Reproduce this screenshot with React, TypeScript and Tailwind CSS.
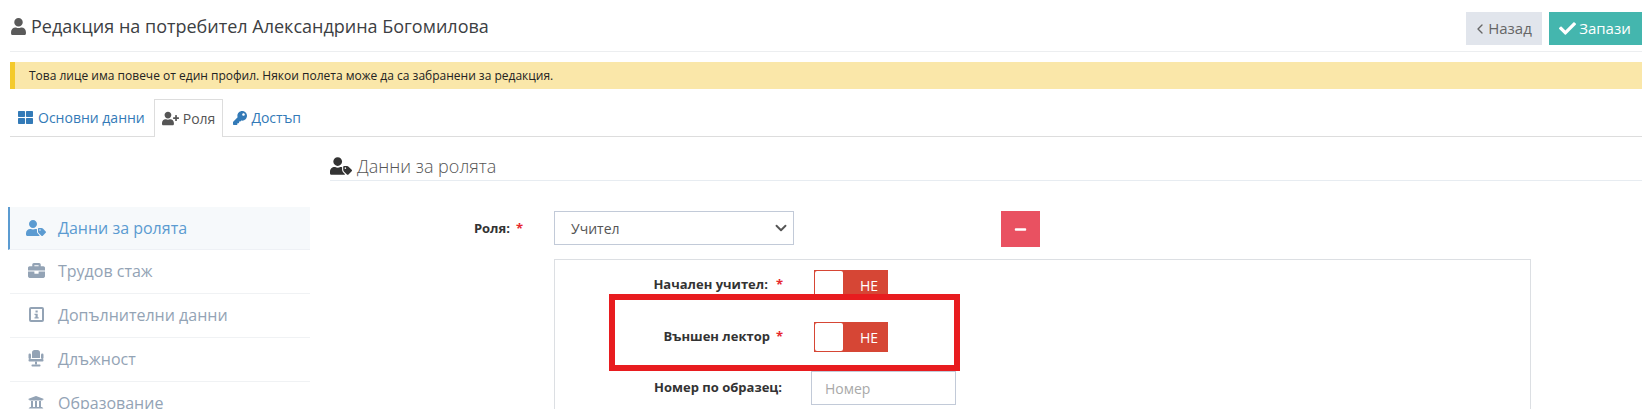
import { ChevronDown, ChevronLeft } from "lucide-react";
import {
  FaBriefcase,
  FaCheck,
  FaKey,
  FaMinus,
  FaThLarge,
  FaUniversity,
  FaUser,
  FaUserPlus,
  FaUserTag,
} from "react-icons/fa";

function InfoSquareIcon() {
  return (
    <svg width="15" height="15" viewBox="0 0 15 15" fill="none">
      <rect x="1" y="1" width="13" height="13" rx="1" stroke="currentColor" strokeWidth="2" />
      <rect x="6.5" y="3.5" width="2.2" height="2" fill="currentColor" />
      <path d="M5.5 6.7h3.2v3.6h1v1.2H5.5v-1.2h1V7.9h-1z" fill="currentColor" />
    </svg>
  );
}

function OfficeChairIcon() {
  return (
    <svg width="16" height="17" viewBox="0 0 16 17" fill="currentColor">
      <path d="M4 2.500C4 1 5 0 6.500 0h3C11 0 12 1 12 2.500V8H4z" />
      <rect x="0.500" y="3.500" width="2.500" height="5.500" rx="1.200" />
      <rect x="13" y="3.500" width="2.500" height="5.500" rx="1.200" />
      <rect x="0.500" y="9" width="15" height="2.500" rx="1" />
      <rect x="7" y="11.500" width="2" height="3" />
      <rect x="3.500" y="14.500" width="9" height="2" rx="0.800" />
    </svg>
  );
}

const sideItems = [
  { label: "Трудов стаж", icon: <FaBriefcase size={17} /> },
  { label: "Допълнителни данни", icon: <InfoSquareIcon /> },
  { label: "Длъжност", icon: <OfficeChairIcon /> },
  { label: "Образование", icon: <FaUniversity size={16} /> },
];

function Toggle() {
  return (
    <div className="flex h-[30px] w-[74px] bg-[#d64635] text-[14px] text-white">
      <div className="m-px w-[28px] rounded-[2px] bg-white" />
      <div className="flex flex-1 items-center justify-center pl-[6px]">НЕ</div>
    </div>
  );
}

function Required() {
  return <span className="ml-[8px] text-[#e7282e]">*</span>;
}

export default function App() {
  return (
    <div className="relative h-[409px] overflow-hidden bg-white pl-[10px] pr-[9px] font-['Open_Sans',sans-serif] text-[#333]">
      <header className="flex h-[52px] items-start justify-between border-b border-[#eceef0]">
        <h1 className="mt-[12px] flex items-center gap-[4px] text-[18px] leading-[28px] text-[#3c4043]">
          <FaUser size={17} className="text-[#5a5a5a]" />
          Редакция на потребител Александрина Богомилова
        </h1>
        <div className="mt-[12px] flex gap-[7px]">
          <button className="flex h-[33px] w-[76px] items-center justify-center bg-[#e1e5ec] pr-[4px] text-[15px] text-[#666]">
            <ChevronLeft size={16} strokeWidth={2} />
            Назад
          </button>
          <button className="flex h-[33px] w-[93px] items-center justify-center gap-[3px] bg-[#44b6ae] pr-[1px] text-[15px] text-white">
            <FaCheck size={17} />
            Запази
          </button>
        </div>
      </header>

      <div className="mt-[10px] flex h-[27px] items-center border-l-[5px] border-[#f4ca2c] bg-[#fae7a9] pl-[14px] text-[12px] text-[#222]">
        Това лице има повече от един профил. Някои полета може да са забранени за редакция.
      </div>

      <nav className="mt-[10px] flex h-[38px] items-end border-b border-[#ddd] text-[14px]">
        <a className="flex h-[37px] items-center gap-[5px] pl-[8px] pr-[9px] text-[#337ab7]">
          <FaThLarge size={15} />
          Основни данни
        </a>
        <a className="-mb-px flex h-[38px] items-center gap-[4px] border border-b-0 border-[#ddd] bg-white px-[7px] text-[#555]">
          <FaUserPlus size={17} />
          Роля
        </a>
        <a className="flex h-[37px] items-center gap-[4px] px-[10px] text-[#337ab7]">
          <FaKey size={14} />
          Достъп
        </a>
      </nav>

      <div className="flex">
        <aside className="mt-[70px] w-[300px] shrink-0">
          <div className="-ml-[2px] flex h-[43px] items-center gap-[12px] border-b border-[#eef1f5] border-l-2 border-l-[#5b9bd1] bg-[#f6f9fb] pl-[16px] text-[16px] text-[#5b9bd1]">
            <span className="flex w-[20px] justify-center">
              <FaUserTag size={20} />
            </span>
            Данни за ролята
          </div>
          {sideItems.map((item) => (
            <div
              key={item.label}
              className="flex h-[44px] items-center gap-[12px] border-b border-[#f0f2f4] pb-[2px] pl-[16px] text-[16px] text-[#93a3b5]"
            >
              <span className="flex w-[20px] justify-center">{item.icon}</span>
              {item.label}
            </div>
          ))}
        </aside>

        <main className="ml-[20px] flex-1">
          <h2 className="mt-[16px] flex h-[28px] items-center gap-[5px] border-b border-[#e7ecf1] pb-[1px] text-[18px] font-light text-[#555]">
            <FaUserTag size={22} className="text-[#333]" />
            Данни за ролята
          </h2>

          <div className="mt-[30px] flex items-start">
            <label className="mt-[8px] w-[224px] pr-[31px] text-right text-[13px] font-bold leading-[18px]">
              Роля:
              <span className="ml-[6px] text-[#e7282e]">*</span>
            </label>
            <div className="flex h-[34px] w-[240px] items-center justify-between border border-[#c2cad8] pl-[16px] pr-[3px] text-[14px] text-[#555]">
              Учител
              <ChevronDown size={18} strokeWidth={2.500} />
            </div>
            <button className="ml-[207px] flex h-[36px] w-[39px] items-center justify-center bg-[#e95161] text-white">
              <FaMinus size={13} />
            </button>
          </div>

          <div className="ml-[224px] mt-[12px] h-[200px] w-[977px] border border-[#dcdfe3]">
            <div className="mt-[10px] flex items-center">
              <label className="w-[228px] text-right text-[13px] font-bold">
                Начален учител:
                <Required />
              </label>
              <div className="ml-[31px]">
                <Toggle />
              </div>
            </div>
            <div className="mt-[22px] flex items-center">
              <label className="w-[228px] text-right text-[13px] font-bold">
                Външен лектор
                <span className="ml-[6px] text-[#e7282e]">*</span>
              </label>
              <div className="ml-[31px]">
                <Toggle />
              </div>
            </div>
            <div className="mt-[19px] flex items-center">
              <label className="w-[228px] pr-[1px] text-right text-[13px] font-bold">Номер по образец:</label>
              <div className="ml-[28px] flex h-[34px] w-[145px] items-center border border-[#c2cad8] pl-[13px] text-[14px] text-[#a9a9a9]">
                Номер
              </div>
            </div>
          </div>
        </main>
      </div>

      <div className="absolute left-[609px] top-[294px] h-[77px] w-[351px] border-[6px] border-[#e81c1f]" />
    </div>
  );
}
